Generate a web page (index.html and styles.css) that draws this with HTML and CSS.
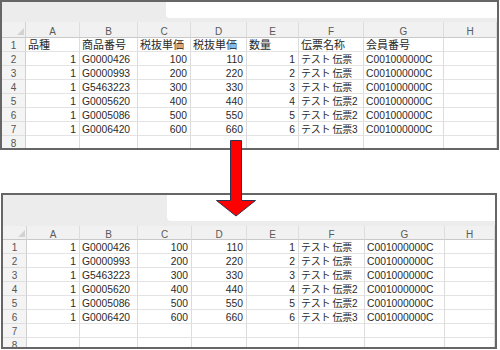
FILE: index.html
```html
<!DOCTYPE html>
<html>
<head>
<meta charset="utf-8">
<link rel="stylesheet" href="styles.css">
</head>
<body>
<div class="sheet sheet-top">
  <div class="bar"><div class="namebox"></div><div class="formula"></div></div>
  <div class="grid">
    <div class="corner"><span class="tri"></span></div><div class="ch">A</div><div class="ch">B</div><div class="ch">C</div><div class="ch">D</div><div class="ch">E</div><div class="ch">F</div><div class="ch">G</div><div class="ch">H</div>
    <div class="rh">1</div><div class="c jp">品種</div><div class="c jp">商品番号</div><div class="c jp">税抜単価</div><div class="c jp">税抜単価</div><div class="c jp">数量</div><div class="c jp">伝票名称</div><div class="c jp">会員番号</div><div class="c"></div>
    <div class="rh">2</div><div class="c r">1</div><div class="c">G0000426</div><div class="c r">100</div><div class="c r">110</div><div class="c r">1</div><div class="c jd">テスト 伝票</div><div class="c">C001000000C</div><div class="c"></div>
    <div class="rh">3</div><div class="c r">1</div><div class="c">G0000993</div><div class="c r">200</div><div class="c r">220</div><div class="c r">2</div><div class="c jd">テスト 伝票</div><div class="c">C001000000C</div><div class="c"></div>
    <div class="rh">4</div><div class="c r">1</div><div class="c">G5463223</div><div class="c r">300</div><div class="c r">330</div><div class="c r">3</div><div class="c jd">テスト 伝票</div><div class="c">C001000000C</div><div class="c"></div>
    <div class="rh">5</div><div class="c r">1</div><div class="c">G0005620</div><div class="c r">400</div><div class="c r">440</div><div class="c r">4</div><div class="c jd">テスト 伝票2</div><div class="c">C001000000C</div><div class="c"></div>
    <div class="rh">6</div><div class="c r">1</div><div class="c">G0005086</div><div class="c r">500</div><div class="c r">550</div><div class="c r">5</div><div class="c jd">テスト 伝票2</div><div class="c">C001000000C</div><div class="c"></div>
    <div class="rh">7</div><div class="c r">1</div><div class="c">G0006420</div><div class="c r">600</div><div class="c r">660</div><div class="c r">6</div><div class="c jd">テスト 伝票3</div><div class="c">C001000000C</div><div class="c"></div>
    <div class="rh">8</div><div class="c"></div><div class="c"></div><div class="c"></div><div class="c"></div><div class="c"></div><div class="c"></div><div class="c"></div><div class="c"></div>
  </div>
</div>

<svg class="arrow" width="42" height="80" viewBox="0 0 42 80">
  <polygon points="15.5,2.5 26.5,2.5 26.5,62.5 40.5,62.5 21,78 1.5,62.5 15.5,62.5" fill="#ff0000" stroke="#2c3550" stroke-width="1"/>
</svg>

<div class="sheet sheet-bottom">
  <div class="bar"><div class="namebox"></div><div class="formula"></div></div>
  <div class="grid">
    <div class="corner"><span class="tri"></span></div><div class="ch">A</div><div class="ch">B</div><div class="ch">C</div><div class="ch">D</div><div class="ch">E</div><div class="ch">F</div><div class="ch">G</div><div class="ch">H</div>
    <div class="rh">1</div><div class="c r">1</div><div class="c">G0000426</div><div class="c r">100</div><div class="c r">110</div><div class="c r">1</div><div class="c jd">テスト 伝票</div><div class="c">C001000000C</div><div class="c"></div>
    <div class="rh">2</div><div class="c r">1</div><div class="c">G0000993</div><div class="c r">200</div><div class="c r">220</div><div class="c r">2</div><div class="c jd">テスト 伝票</div><div class="c">C001000000C</div><div class="c"></div>
    <div class="rh">3</div><div class="c r">1</div><div class="c">G5463223</div><div class="c r">300</div><div class="c r">330</div><div class="c r">3</div><div class="c jd">テスト 伝票</div><div class="c">C001000000C</div><div class="c"></div>
    <div class="rh">4</div><div class="c r">1</div><div class="c">G0005620</div><div class="c r">400</div><div class="c r">440</div><div class="c r">4</div><div class="c jd">テスト 伝票2</div><div class="c">C001000000C</div><div class="c"></div>
    <div class="rh">5</div><div class="c r">1</div><div class="c">G0005086</div><div class="c r">500</div><div class="c r">550</div><div class="c r">5</div><div class="c jd">テスト 伝票2</div><div class="c">C001000000C</div><div class="c"></div>
    <div class="rh">6</div><div class="c r">1</div><div class="c">G0006420</div><div class="c r">600</div><div class="c r">660</div><div class="c r">6</div><div class="c jd">テスト 伝票3</div><div class="c">C001000000C</div><div class="c"></div>
    <div class="rh">7</div><div class="c"></div><div class="c"></div><div class="c"></div><div class="c"></div><div class="c"></div><div class="c"></div><div class="c"></div><div class="c"></div>
    <div class="rh">8</div><div class="c"></div><div class="c"></div><div class="c"></div><div class="c"></div><div class="c"></div><div class="c"></div><div class="c"></div><div class="c"></div>
  </div>
</div>
</body>
</html>
```
FILE: styles.css
```css
html, body {
  margin: 0;
  padding: 0;
  background: #ffffff;
}
body {
  position: relative;
  width: 500px;
  height: 350px;
  overflow: hidden;
  font-family: "Liberation Sans", "Noto Sans CJK JP", sans-serif;
  font-size: 10px;
  color: #2a2a2a;
}
.sheet {
  box-sizing: border-box;
  border: 2px solid #666666;
  background: #ececec;
  overflow: hidden;
  display: flex;
  flex-direction: column;
}
.sheet-top {
  width: 499px;
  height: 150px;
  --bar-h: 16px;
  --band: 4px;
  --hdr-h: 16px;
}
.sheet-bottom {
  margin-top: 43px;
  margin-left: 1px;
  width: 496px;
  height: 156px;
  --bar-h: 26px;
  --band: 5px;
  --hdr-h: 14px;
}
.bar {
  display: flex;
  flex: 0 0 auto;
  height: var(--bar-h);
  margin-bottom: var(--band);
}
.namebox {
  flex: 0 0 164px;
}
.formula {
  flex: 1 1 auto;
  background: #ffffff;
  border-bottom-left-radius: 4px;
}
.grid {
  display: grid;
  grid-template-rows: var(--hdr-h);
  grid-auto-rows: 14px;
  background: #ffffff;
  flex: 1 1 auto;
}
.sheet-top .grid {
  grid-template-columns: 24px 54px 58px 53px 56px 52px 65px 80px 53px;
}
.sheet-bottom .grid {
  grid-template-columns: 24px 53px 58px 54px 55px 52px 66px 80px 50px;
}
.corner, .ch {
  box-sizing: border-box;
  background: #f1f1f1;
  border-bottom: 1px solid #c9c9c9;
}
.corner {
  position: relative;
  border-right: 1px solid #d4d4d4;
}
.tri {
  position: absolute;
  right: 1px;
  bottom: 2px;
  width: 0;
  height: 0;
  border-left: 7px solid transparent;
  border-bottom: 7px solid #d2d2d2;
}
.ch {
  border-right: 1px solid #dddddd;
  color: #5a5a5a;
  text-align: center;
  line-height: calc(var(--hdr-h) + 1px);
  padding-top: 1px;
  font-size: 10px;
}
.rh {
  box-sizing: border-box;
  background: #f4f4f4;
  border-right: 1px solid #cfcfcf;
  border-bottom: 1px solid #dedede;
  color: #555555;
  text-align: center;
  line-height: 15px;
  font-size: 10px;
}
.c {
  box-sizing: border-box;
  border-right: 1px solid #dcdcdc;
  border-bottom: 1px solid #e3e3e3;
  line-height: 15px;
  padding: 0 2px;
  white-space: nowrap;
  font-size: 10.3px;
}
.c.r {
  text-align: right;
  padding-right: 3px;
}
.c.jp {
  font-size: 11px;
  line-height: 14px;
}
.c.jd {
  font-size: 10px;
  letter-spacing: -0.3px;
}
.arrow {
  position: absolute;
  left: 215px;
  top: 138px;
}
```
